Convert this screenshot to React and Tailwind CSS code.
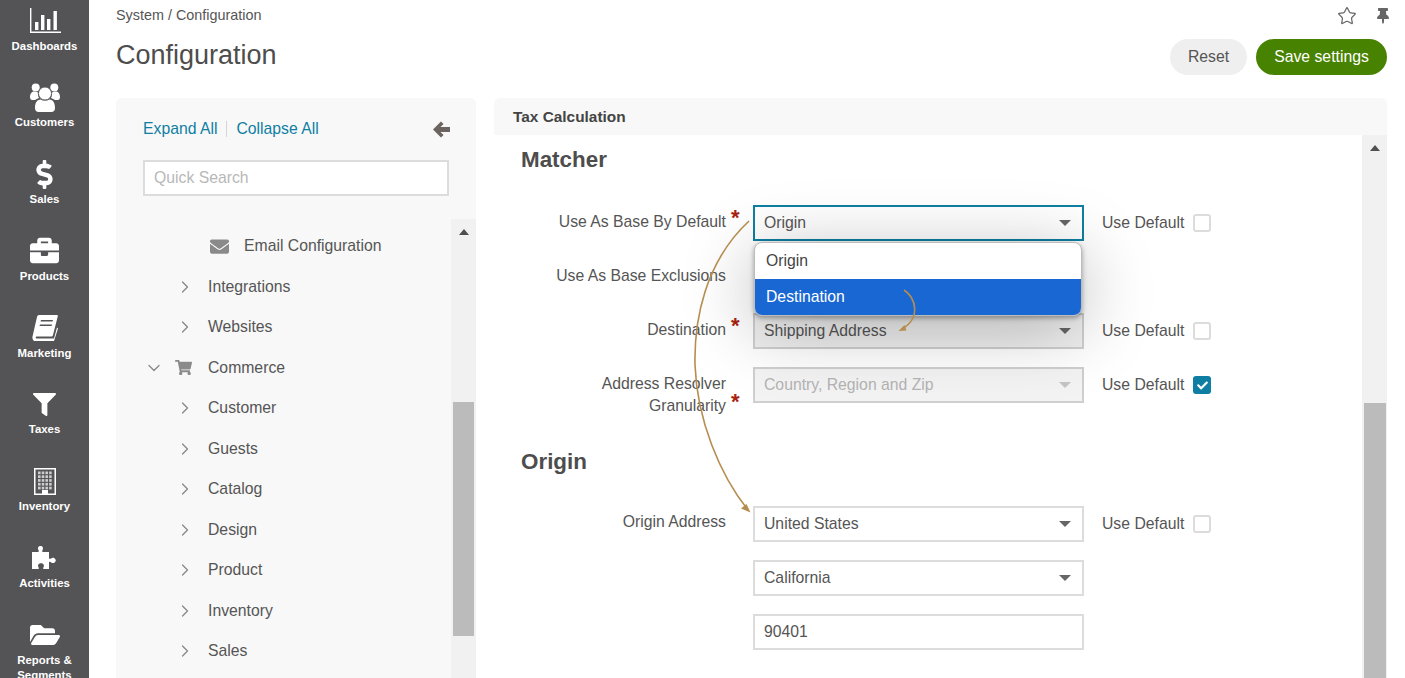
import { ChevronRight, ChevronDown, Star } from 'lucide-react'
import { FaDollarSign, FaBriefcase, FaFilter, FaFolderOpen, FaEnvelope, FaShoppingCart, FaThumbtack, FaCheck } from 'react-icons/fa'

function DashIcon() {
  return (
    <svg width="32" height="26" viewBox="0 0 32 26" fill="white">
      <path d="M1 0h1.4v23.4H32V25H1z" />
      <rect x="6" y="14" width="3.4" height="8" />
      <rect x="12" y="7" width="3.4" height="15" />
      <rect x="18" y="11" width="3.4" height="11" />
      <rect x="24.5" y="3" width="3.4" height="19" />
    </svg>
  )
}

function UsersIcon() {
  return (
    <svg width="30" height="29" viewBox="0 0 30 29" fill="white">
      <circle cx="5.700" cy="4.500" r="4" />
      <circle cx="24.300" cy="4.500" r="4" />
      <path d="M0 14c0-3 1.500-5.500 4-5.500 1.500 0 4 1 5 1.500-1 1-1 3 0 5-1.500.5-3 1.500-4 2H2c-1 0-2-1-2-3zM30 14c0-3-1.500-5.500-4-5.500-1.500 0-4 1-5 1.500 1 1 1 3 0 5 1.500.5 3 1.500 4 2h3c1 0 2-1 2-3z" />
      <circle cx="15" cy="10.500" r="6.600" stroke="#545456" strokeWidth="1" />
      <path d="M5 25c0-5 2-8.500 5.500-8.500 1.500.8 3 1.200 4.500 1.200s3-.4 4.500-1.200C23 16.500 25 20 25 25c0 2.500-1.500 4-3.500 4h-13C6.500 29 5 27.500 5 25z" />
    </svg>
  )
}

function BookIcon() {
  return (
    <svg width="26" height="26" viewBox="0 0 26 26" fill="white">
      <path d="M7 0h18c.8 0 1 .6.8 1.300L21 20c-.3 1-.8 1.500-1.800 1.500H5c-1 0-1.600 1-1.200 1.500.3.500 1 .5 1.500.5H22l3-11 1 1-3.800 12c-.2.700-.8 1-1.500 1H4c-2.500 0-4-2-3.500-5L5 2c.3-1.200 1-2 2-2z" />
      <path fill="#545456" d="M9 5h12l-.5 1.600h-12zM8 9.500h12l-.5 1.600h-12z" />
    </svg>
  )
}

function BuildingIcon() {
  const cells = []
  for (let r = 0; r < 5; r++) {
    for (let c = 0; c < 4; c++) {
      cells.push(<rect key={`${r}-${c}`} x={4 + c * 3.7} y={3.5 + r * 3.8} width="2.600" height="2.700" fillOpacity="0.7" />)
    }
  }
  return (
    <svg width="22" height="27" viewBox="0 0 22 27" fill="white">
      <path fillRule="evenodd" d="M0 0h22v27H0zM1.500 1.500v24h19v-24z" />
      <rect x="8" y="22" width="6" height="5" />
      {cells}
    </svg>
  )
}

function PuzzleIcon() {
  return (
    <svg width="26" height="25" viewBox="0 0 26 25" fill="white">
      <path d="M0 6h6c1 0 1-1 .5-2C5.500 2.500 6 0 8.500 0S11.500 2.500 10.500 4c-.5 1-.5 2 .5 2h6v6c0 1 1 1 2 .5 1.500-1 3.500-1 4.500 1 .8 1.500-.5 3.500-2.500 3.500-1 0-2-.5-2.500-1-.7-.5-1.500-.4-1.500.5V23h-5c-1 0-1-1-.5-1.800.8-1.500.5-4-2.500-4s-3.300 2.500-2.500 4c.5.800.5 1.800-.5 1.800H0z" />
    </svg>
  )
}

const NAV = [
  { label: 'Dashboards', icon: <DashIcon /> },
  { label: 'Customers', icon: <UsersIcon /> },
  { label: 'Sales', icon: <FaDollarSign size={29} color="white" /> },
  { label: 'Products', icon: <FaBriefcase size={29} color="white" /> },
  { label: 'Marketing', icon: <BookIcon /> },
  { label: 'Taxes', icon: <FaFilter size={23} color="white" /> },
  { label: 'Inventory', icon: <BuildingIcon /> },
  { label: 'Activities', icon: <PuzzleIcon /> },
  { label: <>Reports &<br />Segments</>, icon: <FaFolderOpen size={30} color="white" /> },
]

const TREE = ['Integrations', 'Websites', 'Commerce', 'Customer', 'Guests', 'Catalog', 'Design', 'Product', 'Inventory', 'Sales']

function Sidebar() {
  return (
    <aside className="w-[89px] shrink-0 bg-[#545456] pt-[4.500px]">
      {NAV.map((n, i) => (
        <div key={i} className="h-[76.8px] flex flex-col items-center">
          <div className="h-[32px] flex items-center justify-center">{n.icon}</div>
          <div className="mt-[2px] text-center text-[11.400px] leading-[15px] font-bold text-white">{n.label}</div>
        </div>
      ))}
    </aside>
  )
}

function Tree() {
  return (
    <div className="flex-1 pt-[7px] text-[15.750px] text-[#555]">
      <div className="h-[40.5px] flex items-center pl-[94px]">
        <FaEnvelope size={19} color="#8a8a8a" />
        <span className="ml-[15px]">Email Configuration</span>
      </div>
      {TREE.map((t) => (
        <div key={t} className="h-[40.5px] flex items-center">
          {t === 'Commerce' ? (
            <>
              <ChevronDown size={20} color="#888" strokeWidth={1.5} className="ml-[28px]" />
              <FaShoppingCart size={17} color="#8a8a8a" className="ml-[11px]" />
              <span className="ml-[16px]">{t}</span>
            </>
          ) : (
            <>
              <ChevronRight size={20} color="#888" strokeWidth={1.5} className="ml-[59px]" />
              <span className="ml-[13px]">{t}</span>
            </>
          )}
        </div>
      ))}
    </div>
  )
}

function ScrollUp() {
  return <div className="mx-auto mt-[9px] w-0 h-0 border-x-[5.5px] border-x-transparent border-b-[6px] border-b-[#505050]" />
}

function LeftPanel() {
  return (
    <section className="w-[360px] shrink-0 flex flex-col bg-[#f8f8f8] rounded-t-md">
      <div className="pl-[27px] pr-[27px] pt-[21px]">
        <div className="h-5 flex items-center text-[15.750px] text-[#0e7fa3]">
          <span>Expand All</span>
          <span className="mx-[9px] h-4 w-px bg-[#d5d5d5]" />
          <span>Collapse All</span>
          <svg width="17" height="17" viewBox="0 0 17 17" fill="#6b6460" className="ml-auto mr-[-1px]">
            <path d="M0 8.500L8 .5l2.500 2.500L7.500 6H17v5H7.500l3 3L8 16.500z" />
          </svg>
        </div>
        <input
          readOnly
          placeholder="Quick Search"
          className="mt-[21px] block h-9 w-[306px] border-2 border-[#dcdcdc] bg-white px-[9px] text-[15.750px] outline-none placeholder:text-[#b8b8b8]"
        />
      </div>
      <div className="mt-[23px] flex flex-1 min-h-0 overflow-hidden">
        <Tree />
        <div className="w-[25px] shrink-0 bg-[#f1f1f1]">
          <div className="h-[183px] pt-px"><ScrollUp /></div>
          <div className="mx-[2px] h-[234px] bg-[#bbbbbb]" />
        </div>
      </div>
    </section>
  )
}

function Select({ value, active, shaded, disabled, children }) {
  const border = active ? 'border-[#0e7fa3]' : disabled || shaded ? 'border-[#cfcfcf]' : 'border-[#dcdcdc]'
  const bg = disabled ? 'bg-[#f3f3f3]' : shaded ? 'bg-[#f0f0f0]' : 'bg-white'
  return (
    <div className={`relative flex h-9 w-[331px] shrink-0 items-center justify-between border-2 px-[9px] ${border} ${bg}`}>
      <span className={disabled ? 'text-[#b4b4b4]' : 'text-[#555]'}>{value}</span>
      <span className={`mr-[2px] h-0 w-0 border-x-[6px] border-x-transparent border-t-[6px] ${disabled ? 'border-t-[#c4c4c4]' : 'border-t-[#666]'}`} />
      {children}
    </div>
  )
}

function UseDefault({ checked }) {
  return (
    <div className="ml-[18px] flex h-9 items-center text-[#555]">
      <span>Use Default</span>
      {checked ? (
        <span className="ml-[9px] flex h-[18px] w-[18px] items-center justify-center rounded-[3px] bg-[#0e7fa3]">
          <FaCheck size={11} color="white" />
        </span>
      ) : (
        <span className="ml-[9px] h-[18px] w-[18px] rounded-[3px] border-2 border-[#dcdcdc] bg-white" />
      )}
    </div>
  )
}

function Row({ label, required, children }) {
  return (
    <div className="mb-[18px] flex items-start">
      <div className="flex w-[259px] shrink-0">
        <div className="w-[232px] pt-[5.500px] text-right leading-[22.500px] text-[#555]">{label}</div>
        {required && <div className="mb-[4px] self-end pl-[5px] text-[22px] font-bold leading-[22.500px] text-[#a8220f]">*</div>}
      </div>
      {children}
    </div>
  )
}

function Dropdown() {
  return (
    <div className="absolute left-[-1px] top-[35px] z-10 w-[328px] overflow-hidden rounded-lg border border-[#bdbdbd] bg-white shadow-[0_2px_5px_rgba(0,0,0,0.35),0_12px_70px_rgba(0,0,0,0.28)]">
      <div className="flex h-9 items-center px-[11px] text-[#444]">Origin</div>
      <div className="flex h-9 items-center bg-[#1967d2] px-[11px] text-white">Destination</div>
    </div>
  )
}

function FormPanel() {
  return (
    <section className="flex min-w-0 flex-1 flex-col">
      <div className="flex h-[37px] items-center rounded-t-md bg-[#f8f8f8] pl-[19px] text-[15.400px] font-bold text-[#444]">Tax Calculation</div>
      <div className="flex flex-1 min-h-0 overflow-hidden">
        <div className="flex-1 pt-[10px] text-[15.750px]">
          <h2 className="mb-[30px] pl-[27px] text-[22.400px] font-bold leading-[30px] text-[#4d4d4d]">Matcher</h2>
          <Row label="Use As Base By Default" required>
            <Select value="Origin" active><Dropdown /></Select>
            <UseDefault />
          </Row>
          <Row label="Use As Base Exclusions"><div className="h-9" /></Row>
          <Row label="Destination" required>
            <Select value="Shipping Address" shaded />
            <UseDefault />
          </Row>
          <Row label={<>Address Resolver<br />Granularity</>} required>
            <Select value="Country, Region and Zip" disabled />
            <UseDefault checked />
          </Row>
          <h2 className="mb-[29px] mt-[29px] pl-[27px] text-[22.400px] font-bold leading-[30px] text-[#4d4d4d]">Origin</h2>
          <Row label="Origin Address">
            <Select value="United States" />
            <UseDefault />
          </Row>
          <Row label="">
            <Select value="California" />
          </Row>
          <Row label="">
            <div className="flex h-9 w-[331px] items-center border-2 border-[#dcdcdc] bg-white px-[9px] text-[#555]">90401</div>
          </Row>
        </div>
        <div className="w-[25px] shrink-0 bg-[#f1f1f1]">
          <div className="h-[268px] pt-px"><ScrollUp /></div>
          <div className="ml-[2px] mr-px h-[400px] bg-[#bbbbbb]" />
        </div>
      </div>
    </section>
  )
}

function Arrows() {
  return (
    <svg className="pointer-events-none absolute left-0 top-0 z-20" width="1405" height="678" fill="none" stroke="#b58d4f" strokeWidth="1.600">
      <path d="M749 221C705 262 694 320 695 365C697 420 720 475 748 510" />
      <path d="M750.500 512.500L741 508.500L746.500 504Z" fill="#b58d4f" stroke="none" />
      <path d="M904 290C916 298 921 318 902 329" />
      <path d="M898.500 331L904.500 325L906.500 330.500Z" fill="#b58d4f" stroke="none" />
    </svg>
  )
}

export default function App() {
  return (
    <div className="relative flex h-[678px] overflow-hidden bg-white font-['Liberation_Sans',Arial,sans-serif]">
      <Sidebar />
      <main className="flex min-w-0 flex-1 flex-col pl-[27px] pr-[18px]">
        <header className="flex h-[98px] shrink-0 justify-between">
          <div>
            <div className="pt-[5px] text-[14.400px] leading-5 text-[#555]">System / Configuration</div>
            <h1 className="mt-[13px] text-[27px] leading-[34px] text-[#4d4d4d]">Configuration</h1>
          </div>
          <div className="flex flex-col items-end">
            <div className="mr-[-4px] mt-[6px] flex h-[20px] items-center gap-[18.500px]">
              <Star size={20} color="#666" strokeWidth={1.5} />
              <FaThumbtack size={16} color="#666" />
            </div>
            <div className="mt-[13px] flex gap-[9px] text-[15.750px]">
              <div className="flex h-9 w-[77px] items-center justify-center rounded-full bg-[#efefef] text-[#555]">Reset</div>
              <div className="flex h-9 w-[131px] items-center justify-center rounded-full bg-[#478200] text-white">Save settings</div>
            </div>
          </div>
        </header>
        <div className="flex min-h-0 flex-1 gap-[18px]">
          <LeftPanel />
          <FormPanel />
        </div>
      </main>
      <Arrows />
    </div>
  )
}
